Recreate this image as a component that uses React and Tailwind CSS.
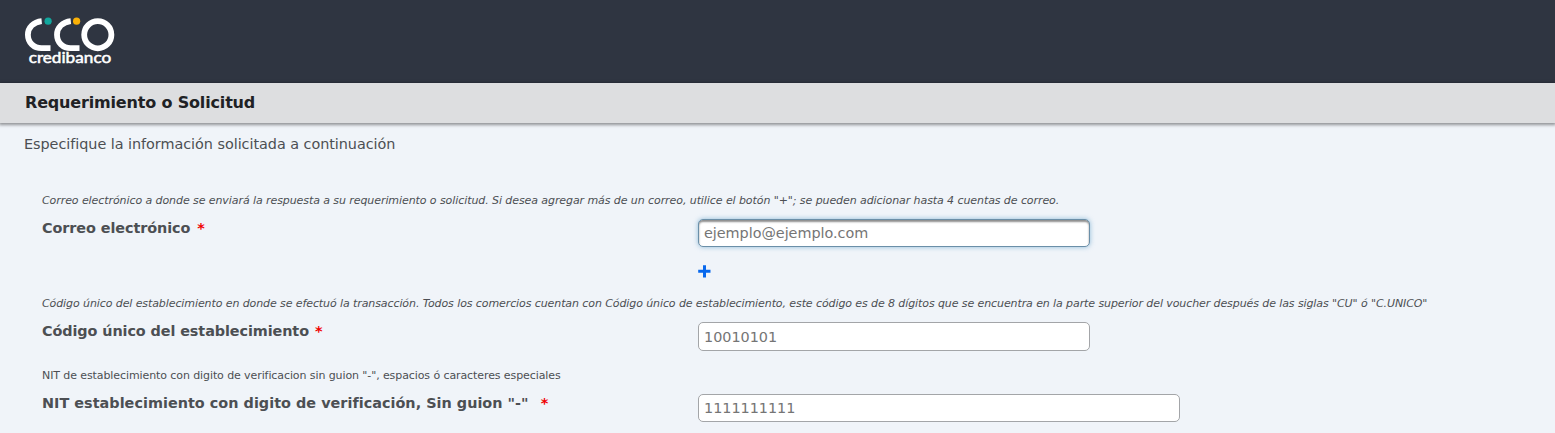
import React from "react";

function Logo() {
  return (
    <svg width="92" height="52" viewBox="0 0 92 52" aria-label="credibanco">
      <g fill="none" stroke="#ffffff" strokeWidth="5.800">
        <path d="M17.700 5.200C9.500 6 3.900 11.500 3.900 18.700C3.900 26.500 9.800 32.200 17.500 32.200H26.500" />
        <path d="M46.800 5.200C38.600 6 33 11.500 33 18.700C33 26.500 38.900 32.200 46.600 32.200H55.500" />
        <circle cx="73.800" cy="18.700" r="13.600" />
      </g>
      <circle cx="24.100" cy="5.200" r="3.600" fill="#12a79d" />
      <circle cx="52.600" cy="5.200" r="3.600" fill="#fbb106" />
      <text x="4.700" y="47.200" textLength="82.500" lengthAdjust="spacingAndGlyphs" fill="#ffffff" stroke="#ffffff" strokeWidth="0.500" fontSize="15" className="font-['Lato',sans-serif] font-normal">
        credibanco
      </text>
    </svg>
  );
}

function Field({ hint, hintClass, label, labelClass, starClass, children, className }) {
  return (
    <section className={className}>
      <p className={"h-4 whitespace-nowrap pt-px text-[11px] leading-4 " + hintClass}>{hint}</p>
      <div className="flex items-start">
        <div className="flex w-[656px] shrink-0 whitespace-nowrap pt-[10px] text-[14.4px] leading-5 font-bold">
          <span className={labelClass}>{label}</span>
          <span className={"text-[#f00000] " + starClass}>*</span>
        </div>
        <div>{children}</div>
      </div>
    </section>
  );
}

const inputBase =
  "block border rounded-[5px] bg-white px-[5px] text-[14.4px] leading-5 tracking-[-0.03px] placeholder:text-[#757575] outline-none";

export default function App() {
  return (
    <div className="h-[433px] overflow-hidden bg-[#f0f4f9] font-['DejaVu_Sans',sans-serif] text-[#4c4f53]">
      <header className="h-[83px] bg-[#2f3541] pt-4 pl-6">
        <Logo />
      </header>
      <div className="flex h-10 items-center bg-[#dddee0] pl-[25px] shadow-[0_1px_3px_1px_rgba(0,0,0,0.4)]">
        <h1 className="text-base leading-5 font-bold tracking-[-0.17px] whitespace-nowrap text-[#202124]">Requerimiento o Solicitud</h1>
      </div>
      <main className="pt-[11px] pl-6">
        <p className="text-[14.4px] leading-5 tracking-[-0.04px] whitespace-nowrap">Especifique la información solicitada a continuación</p>
        <form className="pt-[38px] pl-[18px]">
          <Field
            className="h-[103px]"
            hint={'Correo electrónico a donde se enviará la respuesta a su requerimiento o solicitud. Si desea agregar más de un correo, utilice el botón "+"; se pueden adicionar hasta 4 cuentas de correo.'}
            hintClass="italic tracking-[-0.078px]"
            label="Correo electrónico"
            labelClass="tracking-[-0.08px]"
            starClass="ml-[7px]"
          >
            <input
              placeholder="ejemplo@ejemplo.com"
              className={inputBase + " mt-[11px] h-7 w-[392px] border-[#6b8fa8] shadow-[inset_0_2px_2px_rgba(0,0,0,0.45),0_0_5px_rgba(90,155,200,0.65)]"}
            />
            <button type="button" aria-label="Agregar correo" className="mt-[18px] block h-[13px] w-[13px]">
              <svg width="13" height="13" viewBox="0 0 13 13">
                <path d="M6.500 0.300V12.500M0.200 6.300H12.500" stroke="#0868ed" strokeWidth="3" />
              </svg>
            </button>
          </Field>
          <Field
            className="h-[72px]"
            hint={'Código único del establecimiento en donde se efectuó la transacción. Todos los comercios cuentan con Código único de establecimiento, este código es de 8 dígitos que se encuentra en la parte superior del voucher después de las siglas "CU" ó "C.UNICO"'}
            hintClass="italic tracking-[-0.092px]"
            label="Código único del establecimiento"
            labelClass="tracking-[-0.09px]"
            starClass="ml-[6px]"
          >
            <input placeholder="10010101" className={inputBase + " mt-[11px] h-[29px] w-[392px] border-[#a3a5a8]"} />
          </Field>
          <Field
            className="h-[72px]"
            hint={'NIT de establecimiento con digito de verificacion sin guion "-", espacios ó caracteres especiales'}
            hintClass="tracking-[-0.093px]"
            label={'NIT establecimiento con digito de verificación, Sin guion "-"'}
            labelClass="tracking-[0.025px]"
            starClass="ml-[12px]"
          >
            <input placeholder="1111111111" className={inputBase + " mt-[11px] h-7 w-[482px] border-[#a3a5a8]"} />
          </Field>
        </form>
      </main>
    </div>
  );
}
